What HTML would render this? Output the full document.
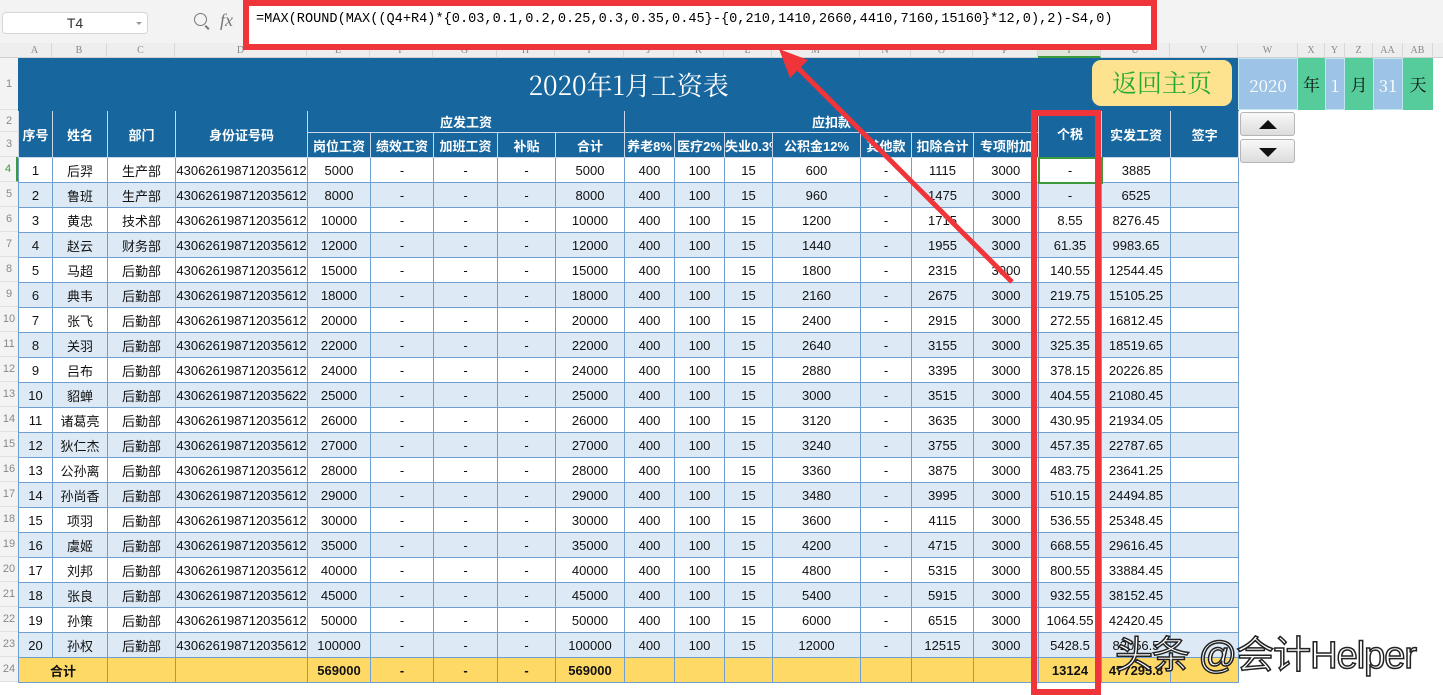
<!DOCTYPE html>
<html><head><meta charset="utf-8">
<style>
*{margin:0;padding:0;box-sizing:border-box}
body{width:1443px;height:690px;overflow:hidden;background:#fff;position:relative;font-family:"Liberation Sans","Noto Sans CJK SC",sans-serif;}
.top{position:absolute;left:0;top:0;width:1443px;height:43px;background:#f3f3f3;}
.namebox{position:absolute;left:2px;top:12px;width:146px;height:22px;background:#fff;border:1px solid #d6d6d6;border-radius:4px;font-size:14px;color:#333;text-align:center;line-height:20px;}
.namebox:after{content:"";position:absolute;right:5px;top:9px;border:3px solid transparent;border-top-color:#999;}
.fx{position:absolute;left:220px;top:10px;font-style:italic;font-family:"Liberation Serif",serif;font-size:18px;color:#777;}
.zoomi{position:absolute;left:194px;top:13px;width:13px;height:13px;border:1.5px solid #777;border-radius:50%;}
.zoomi:after{content:"";position:absolute;left:11px;top:11px;width:5px;height:1.5px;background:#777;transform:rotate(45deg);transform-origin:0 0;}
.formula{position:absolute;left:243px;top:0;width:914px;height:50px;background:#fff;border:6px solid #f0353a;font-family:"Liberation Mono","Noto Sans CJK SC",monospace;font-size:13.6px;line-height:28px;padding-left:7px;color:#000;white-space:nowrap;overflow:hidden;}
.colhdr{position:absolute;top:43px;left:0;width:1443px;height:15px;background:#eeeeee;border-bottom:1px solid #d0d0d0;}
.colhdr span{position:absolute;top:0;font-size:10px;color:#888;text-align:center;line-height:15px;border-right:1px solid #d8d8d8;height:15px;font-family:"Liberation Serif",serif;}
.rowhdr{position:absolute;left:0;width:18px;font-size:11px;color:#888;text-align:center;background:#f3f3f3;border-bottom:1px solid #e0e0e0;}
table{position:absolute;left:18px;top:58px;width:1220px;border-collapse:collapse;table-layout:fixed;}
td{height:25px;font-size:13px;text-align:center;color:#111;border:1px solid #6f9fd0;white-space:nowrap;overflow:hidden;padding:0;}
tr.r2 td{height:22px;}
tr.b td{background:#ddeaf6;}
tr.h td{background:#18669e;color:#fff;font-weight:bold;border-color:#c8d8ea;}
tr.t td{background:#ffd966;font-weight:bold;}
td.title{height:52px;font-family:"Noto Serif CJK SC","Liberation Serif",serif;font-size:26px;font-weight:normal!important;}
.btn{position:absolute;left:1092px;top:60px;width:140px;height:46px;background:#fde38f;border-radius:9px;color:#22aa33;font-size:25px;text-align:center;line-height:44px;font-family:"Noto Serif CJK SC",serif;}
.rb{position:absolute;top:58px;height:52px;font-size:17px;text-align:center;line-height:52px;font-family:"Noto Serif CJK SC",serif;}
.blue{background:#9dc3e6;color:#fff;border:1px solid #bfe6f2;}
.green{background:#55cc9a;color:#111;}
.spin{position:absolute;left:1240px;width:55px;height:24px;background:linear-gradient(#f8f8f8,#dcdcdc);border:1px solid #b5b5b5;border-radius:3px;}
.spin i{position:absolute;left:18px;border:9px solid transparent;}
.redbox{position:absolute;left:1031px;top:110px;width:70px;height:585px;border:6px solid #f0353a;}
.wm{position:absolute;left:1115px;top:624px;font-size:38px;color:#fff;-webkit-text-stroke:1.5px #222;font-family:"Liberation Sans","Noto Sans CJK SC",sans-serif;letter-spacing:-1px;}
</style></head><body>
<div class="top"></div>
<div class="namebox">T4</div>
<div class="zoomi"></div>
<div class="fx">fx</div>
<div class="colhdr">
<span style="left:18px;width:34px">A</span><span style="left:52px;width:55px">B</span><span style="left:107px;width:68px">C</span><span style="left:175px;width:132px">D</span><span style="left:307px;width:63px">E</span><span style="left:370px;width:63px">F</span><span style="left:433px;width:64px">G</span><span style="left:497px;width:58px">H</span><span style="left:555px;width:69px">I</span><span style="left:624px;width:50px">J</span><span style="left:674px;width:50px">K</span><span style="left:724px;width:48px">L</span><span style="left:772px;width:88px">M</span><span style="left:860px;width:51px">N</span><span style="left:911px;width:62px">O</span><span style="left:973px;width:65px">P</span><span style="left:1038px;width:63px;background:#dde6d8;border-bottom:2px solid #3c9a3c">T</span><span style="left:1101px;width:69px">U</span><span style="left:1170px;width:68px">V</span><span style="left:1238px;width:60px">W</span><span style="left:1298px;width:27px">X</span><span style="left:1325px;width:20px">Y</span><span style="left:1345px;width:28px">Z</span><span style="left:1373px;width:30px">AA</span><span style="left:1403px;width:30px">AB</span>
</div>
<div class="formula">=MAX(ROUND(MAX((Q4+R4)*{0.03,0.1,0.2,0.25,0.3,0.35,0.45}-{0,210,1410,2660,4410,7160,15160}*12,0),2)-S4,0)</div>

<div class="rowhdr" style="top:58px;height:52px;line-height:52px">1</div>
<div class="rowhdr" style="top:110px;height:22px;line-height:22px">2</div>
<div class="rowhdr" style="top:132px;height:25px;line-height:25px">3</div>
<div class="rowhdr" style="top:157px;height:25px;line-height:25px;color:#3c9a3c;border-right:2px solid #3c9a3c">4</div>
<div class="rowhdr" style="top:182px;height:25px;line-height:25px">5</div>
<div class="rowhdr" style="top:207px;height:25px;line-height:25px">6</div>
<div class="rowhdr" style="top:232px;height:25px;line-height:25px">7</div>
<div class="rowhdr" style="top:257px;height:25px;line-height:25px">8</div>
<div class="rowhdr" style="top:282px;height:25px;line-height:25px">9</div>
<div class="rowhdr" style="top:307px;height:25px;line-height:25px">10</div>
<div class="rowhdr" style="top:332px;height:25px;line-height:25px">11</div>
<div class="rowhdr" style="top:357px;height:25px;line-height:25px">12</div>
<div class="rowhdr" style="top:382px;height:25px;line-height:25px">13</div>
<div class="rowhdr" style="top:407px;height:25px;line-height:25px">14</div>
<div class="rowhdr" style="top:432px;height:25px;line-height:25px">15</div>
<div class="rowhdr" style="top:457px;height:25px;line-height:25px">16</div>
<div class="rowhdr" style="top:482px;height:25px;line-height:25px">17</div>
<div class="rowhdr" style="top:507px;height:25px;line-height:25px">18</div>
<div class="rowhdr" style="top:532px;height:25px;line-height:25px">19</div>
<div class="rowhdr" style="top:557px;height:25px;line-height:25px">20</div>
<div class="rowhdr" style="top:582px;height:25px;line-height:25px">21</div>
<div class="rowhdr" style="top:607px;height:25px;line-height:25px">22</div>
<div class="rowhdr" style="top:632px;height:25px;line-height:25px">23</div>
<div class="rowhdr" style="top:657px;height:25px;line-height:25px">24</div>

<table>
<colgroup><col style="width:34px"><col style="width:55px"><col style="width:68px"><col style="width:132px"><col style="width:63px"><col style="width:63px"><col style="width:64px"><col style="width:58px"><col style="width:69px"><col style="width:50px"><col style="width:50px"><col style="width:48px"><col style="width:88px"><col style="width:51px"><col style="width:62px"><col style="width:65px"><col style="width:63px"><col style="width:69px"><col style="width:68px"></colgroup>
<tr class="h"><td colspan="19" class="title" style="border-color:#18669e">2020年1月工资表</td></tr>
<tr class="h r2"><td rowspan="2">序号</td><td rowspan="2">姓名</td><td rowspan="2">部门</td><td rowspan="2">身份证号码</td><td colspan="5">应发工资</td><td colspan="7">应扣款</td><td rowspan="2">个税</td><td rowspan="2">实发工资</td><td rowspan="2">签字</td></tr>
<tr class="h"><td>岗位工资</td><td>绩效工资</td><td>加班工资</td><td>补贴</td><td>合计</td><td>养老8%</td><td>医疗2%</td><td>失业0.3%</td><td>公积金12%</td><td>其他款</td><td>扣除合计</td><td>专项附加</td></tr>
<tr><td>1</td><td>后羿</td><td>生产部</td><td>430626198712035612</td><td>5000</td><td>-</td><td>-</td><td>-</td><td>5000</td><td>400</td><td>100</td><td>15</td><td>600</td><td>-</td><td>1115</td><td>3000</td><td style="border:2px solid #3c9a3c">-</td><td>3885</td><td></td></tr>
<tr class="b"><td>2</td><td>鲁班</td><td>生产部</td><td>430626198712035612</td><td>8000</td><td>-</td><td>-</td><td>-</td><td>8000</td><td>400</td><td>100</td><td>15</td><td>960</td><td>-</td><td>1475</td><td>3000</td><td>-</td><td>6525</td><td></td></tr>
<tr><td>3</td><td>黄忠</td><td>技术部</td><td>430626198712035612</td><td>10000</td><td>-</td><td>-</td><td>-</td><td>10000</td><td>400</td><td>100</td><td>15</td><td>1200</td><td>-</td><td>1715</td><td>3000</td><td>8.55</td><td>8276.45</td><td></td></tr>
<tr class="b"><td>4</td><td>赵云</td><td>财务部</td><td>430626198712035612</td><td>12000</td><td>-</td><td>-</td><td>-</td><td>12000</td><td>400</td><td>100</td><td>15</td><td>1440</td><td>-</td><td>1955</td><td>3000</td><td>61.35</td><td>9983.65</td><td></td></tr>
<tr><td>5</td><td>马超</td><td>后勤部</td><td>430626198712035612</td><td>15000</td><td>-</td><td>-</td><td>-</td><td>15000</td><td>400</td><td>100</td><td>15</td><td>1800</td><td>-</td><td>2315</td><td>3000</td><td>140.55</td><td>12544.45</td><td></td></tr>
<tr class="b"><td>6</td><td>典韦</td><td>后勤部</td><td>430626198712035612</td><td>18000</td><td>-</td><td>-</td><td>-</td><td>18000</td><td>400</td><td>100</td><td>15</td><td>2160</td><td>-</td><td>2675</td><td>3000</td><td>219.75</td><td>15105.25</td><td></td></tr>
<tr><td>7</td><td>张飞</td><td>后勤部</td><td>430626198712035612</td><td>20000</td><td>-</td><td>-</td><td>-</td><td>20000</td><td>400</td><td>100</td><td>15</td><td>2400</td><td>-</td><td>2915</td><td>3000</td><td>272.55</td><td>16812.45</td><td></td></tr>
<tr class="b"><td>8</td><td>关羽</td><td>后勤部</td><td>430626198712035612</td><td>22000</td><td>-</td><td>-</td><td>-</td><td>22000</td><td>400</td><td>100</td><td>15</td><td>2640</td><td>-</td><td>3155</td><td>3000</td><td>325.35</td><td>18519.65</td><td></td></tr>
<tr><td>9</td><td>吕布</td><td>后勤部</td><td>430626198712035612</td><td>24000</td><td>-</td><td>-</td><td>-</td><td>24000</td><td>400</td><td>100</td><td>15</td><td>2880</td><td>-</td><td>3395</td><td>3000</td><td>378.15</td><td>20226.85</td><td></td></tr>
<tr class="b"><td>10</td><td>貂蝉</td><td>后勤部</td><td>430626198712035622</td><td>25000</td><td>-</td><td>-</td><td>-</td><td>25000</td><td>400</td><td>100</td><td>15</td><td>3000</td><td>-</td><td>3515</td><td>3000</td><td>404.55</td><td>21080.45</td><td></td></tr>
<tr><td>11</td><td>诸葛亮</td><td>后勤部</td><td>430626198712035612</td><td>26000</td><td>-</td><td>-</td><td>-</td><td>26000</td><td>400</td><td>100</td><td>15</td><td>3120</td><td>-</td><td>3635</td><td>3000</td><td>430.95</td><td>21934.05</td><td></td></tr>
<tr class="b"><td>12</td><td>狄仁杰</td><td>后勤部</td><td>430626198712035612</td><td>27000</td><td>-</td><td>-</td><td>-</td><td>27000</td><td>400</td><td>100</td><td>15</td><td>3240</td><td>-</td><td>3755</td><td>3000</td><td>457.35</td><td>22787.65</td><td></td></tr>
<tr><td>13</td><td>公孙离</td><td>后勤部</td><td>430626198712035612</td><td>28000</td><td>-</td><td>-</td><td>-</td><td>28000</td><td>400</td><td>100</td><td>15</td><td>3360</td><td>-</td><td>3875</td><td>3000</td><td>483.75</td><td>23641.25</td><td></td></tr>
<tr class="b"><td>14</td><td>孙尚香</td><td>后勤部</td><td>430626198712035612</td><td>29000</td><td>-</td><td>-</td><td>-</td><td>29000</td><td>400</td><td>100</td><td>15</td><td>3480</td><td>-</td><td>3995</td><td>3000</td><td>510.15</td><td>24494.85</td><td></td></tr>
<tr><td>15</td><td>项羽</td><td>后勤部</td><td>430626198712035612</td><td>30000</td><td>-</td><td>-</td><td>-</td><td>30000</td><td>400</td><td>100</td><td>15</td><td>3600</td><td>-</td><td>4115</td><td>3000</td><td>536.55</td><td>25348.45</td><td></td></tr>
<tr class="b"><td>16</td><td>虞姬</td><td>后勤部</td><td>430626198712035612</td><td>35000</td><td>-</td><td>-</td><td>-</td><td>35000</td><td>400</td><td>100</td><td>15</td><td>4200</td><td>-</td><td>4715</td><td>3000</td><td>668.55</td><td>29616.45</td><td></td></tr>
<tr><td>17</td><td>刘邦</td><td>后勤部</td><td>430626198712035612</td><td>40000</td><td>-</td><td>-</td><td>-</td><td>40000</td><td>400</td><td>100</td><td>15</td><td>4800</td><td>-</td><td>5315</td><td>3000</td><td>800.55</td><td>33884.45</td><td></td></tr>
<tr class="b"><td>18</td><td>张良</td><td>后勤部</td><td>430626198712035612</td><td>45000</td><td>-</td><td>-</td><td>-</td><td>45000</td><td>400</td><td>100</td><td>15</td><td>5400</td><td>-</td><td>5915</td><td>3000</td><td>932.55</td><td>38152.45</td><td></td></tr>
<tr><td>19</td><td>孙策</td><td>后勤部</td><td>430626198712035612</td><td>50000</td><td>-</td><td>-</td><td>-</td><td>50000</td><td>400</td><td>100</td><td>15</td><td>6000</td><td>-</td><td>6515</td><td>3000</td><td>1064.55</td><td>42420.45</td><td></td></tr>
<tr class="b"><td>20</td><td>孙权</td><td>后勤部</td><td>430626198712035612</td><td>100000</td><td>-</td><td>-</td><td>-</td><td>100000</td><td>400</td><td>100</td><td>15</td><td>12000</td><td>-</td><td>12515</td><td>3000</td><td>5428.5</td><td>82056.5</td><td></td></tr>
<tr class="t"><td colspan="2">合计</td><td></td><td></td><td>569000</td><td>-</td><td>-</td><td>-</td><td>569000</td><td></td><td></td><td></td><td></td><td></td><td></td><td></td><td>13124</td><td>477295.8</td><td></td></tr>
</table>

<div class="btn">返回主页</div>
<div class="rb blue" style="left:1238px;width:60px">2020</div>
<div class="rb green" style="left:1298px;width:27px">年</div>
<div class="rb blue" style="left:1325px;width:20px">1</div>
<div class="rb green" style="left:1345px;width:28px">月</div>
<div class="rb blue" style="left:1373px;width:30px">31</div>
<div class="rb green" style="left:1403px;width:30px">天</div>
<div class="spin" style="top:112px"><i style="top:-2px;border-bottom-color:#111"></i></div>
<div class="spin" style="top:139px"><i style="top:8px;border-top-color:#111"></i></div>

<div class="redbox"></div>
<svg style="position:absolute;left:0;top:0" width="1443" height="690">
<line x1="1012" y1="282" x2="792" y2="62" stroke="#f0353a" stroke-width="5"/>
<polygon points="779,49 808,60 790,78" fill="#f0353a"/>
</svg>
<div class="wm">头条 @会计Helper</div>
</body></html>
